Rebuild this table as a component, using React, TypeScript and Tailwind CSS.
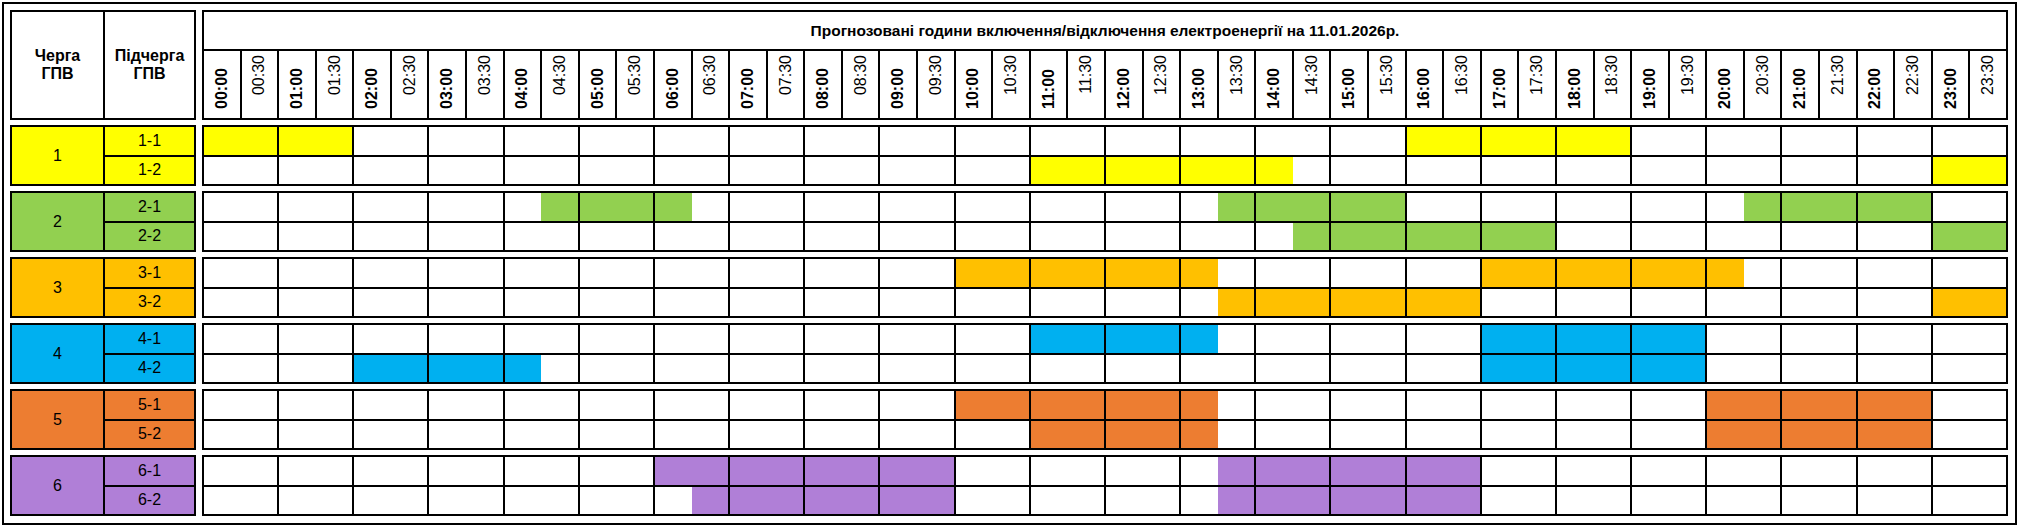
import React from 'react';

type Group = {
  n: number;
  color: string;
  rows: [number, number][][];
};

// відрізки у півгодинах: [початок, кінець)
const groups: Group[] = [
  { n: 1, color: 'bg-[#ffff00]', rows: [[[0, 4], [32, 38]], [[22, 29], [46, 48]]] },
  { n: 2, color: 'bg-[#92d050]', rows: [[[9, 13], [27, 32], [41, 46]], [[29, 36], [46, 48]]] },
  { n: 3, color: 'bg-[#ffc000]', rows: [[[20, 27], [34, 41]], [[27, 34], [46, 48]]] },
  { n: 4, color: 'bg-[#00b0f0]', rows: [[[22, 27], [34, 40]], [[4, 9], [34, 40]]] },
  { n: 5, color: 'bg-[#ed7d31]', rows: [[[20, 27], [40, 46]], [[22, 27], [40, 46]]] },
  { n: 6, color: 'bg-[#b07fd7]', rows: [[[12, 20], [27, 34]], [[13, 20], [27, 34]]] },
];

const hours = Array.from({ length: 24 }, (_, i) => i);
const pad = (n: number) => String(n).padStart(2, '0');

function isOff(ranges: [number, number][], half: number) {
  return ranges.some(([a, b]) => half >= a && half < b);
}

function GroupBlock({ g }: { g: Group }) {
  return (
    <div className="flex gap-[6px] h-[61px] mt-[5px]">
      <div className="w-[186px] bg-black p-[2px] grid grid-cols-[91px_89px] gap-[2px]">
        <div className={`${g.color} flex items-center justify-center text-[16px]`}>{g.n}</div>
        <div className="grid grid-rows-2 gap-[2px]">
          {[1, 2].map((s) => (
            <div key={s} className={`${g.color} flex items-center justify-center text-[16px]`}>
              {g.n}-{s}
            </div>
          ))}
        </div>
      </div>
      <div className="w-[1806px] bg-black p-[2px] grid grid-rows-2 gap-[2px]">
        {g.rows.map((ranges, ri) => (
          <div key={ri} className="grid grid-cols-[repeat(24,minmax(0,1fr))] gap-[2px]">
            {hours.map((h) => (
              <div key={h} className="flex bg-white">
                <div className={`flex-1 ${isOff(ranges, h * 2) ? g.color : 'bg-white'}`}></div>
                <div className={`flex-1 ${isOff(ranges, h * 2 + 1) ? g.color : 'bg-white'}`}></div>
              </div>
            ))}
          </div>
        ))}
      </div>
    </div>
  );
}

export default function App() {
  return (
    <div className="w-[2020px] h-[530px] bg-white p-[2px] text-black font-['Liberation_Sans',Arial,sans-serif]">
      <div className="w-[2015px] h-[523px] border-2 border-black pt-[6px] pl-[6px]">
        {/* шапка */}
        <div className="flex gap-[6px] h-[110px]">
          <div className="w-[186px] bg-black p-[2px] grid grid-cols-[91px_89px] gap-[2px]">
            <div className="bg-white flex items-center justify-center text-center text-[16px] font-bold leading-[18px]">
              Черга<br />ГПВ
            </div>
            <div className="bg-white flex items-center justify-center text-center text-[16px] font-bold leading-[18px]">
              Підчерга<br />ГПВ
            </div>
          </div>
          <div className="w-[1806px] bg-black p-[2px] grid grid-rows-[37px_1fr] gap-[2px]">
            <div className="bg-white flex items-center justify-center text-[15.5px] font-bold">
              Прогнозовані години включення/відключення електроенергії на 11.01.2026р.
            </div>
            <div className="grid grid-cols-[repeat(48,minmax(0,1fr))] gap-[2px]">
              {hours.map((h) => (
                <React.Fragment key={h}>
                  <div className="bg-white flex flex-col items-center justify-end pb-[9px]">
                    <span className="[writing-mode:vertical-rl] rotate-180 text-[16px] font-bold leading-none">
                      {pad(h)}:00
                    </span>
                  </div>
                  <div className="bg-white flex flex-col items-center justify-start pt-[4px]">
                    <span className="[writing-mode:vertical-rl] rotate-180 text-[16px] leading-none">
                      {pad(h)}:30
                    </span>
                  </div>
                </React.Fragment>
              ))}
            </div>
          </div>
        </div>

        {groups.map((g) => (
          <GroupBlock key={g.n} g={g} />
        ))}
      </div>
    </div>
  );
}
